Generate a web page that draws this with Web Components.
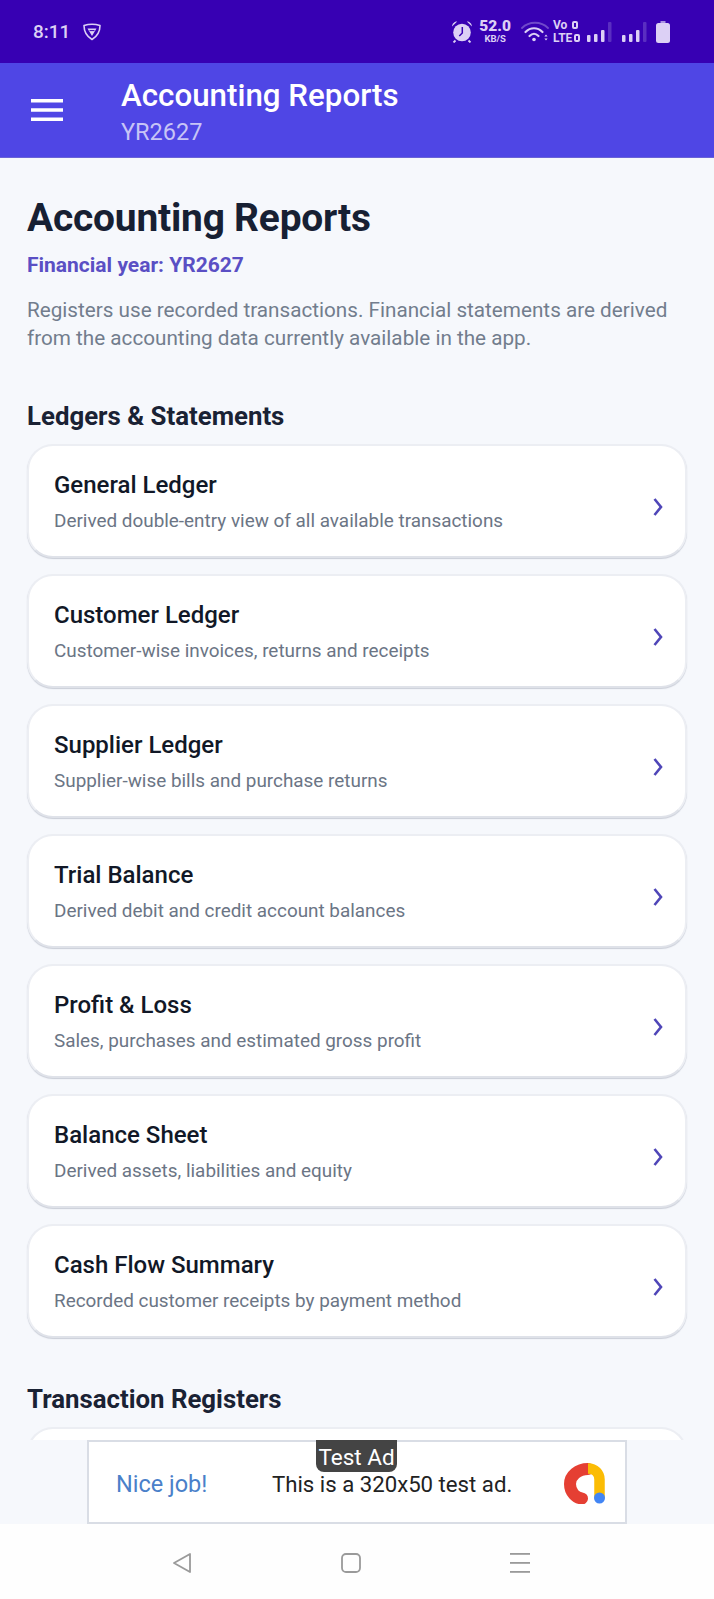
<!DOCTYPE html>
<html lang="en">
  <head>
    <meta charset="UTF-8" />
    <meta name="viewport" content="width=device-width, initial-scale=1.0" />
    <title>Accounting Reports</title>
    <style>
      html, body { margin: 0; padding: 0; }
      body { font-family: Roboto, "Liberation Sans", sans-serif; background: #f6f8fc; }
      report-screen { height: 1599px; }
    </style>
  </head>
  <body>
    <report-screen>
      <status-bar slot="status"></status-bar>
      <app-header slot="header" title="Accounting Reports" subtitle="YR2627"></app-header>

      <page-intro heading="Accounting Reports" year="Financial year: YR2627">
        Registers use recorded transactions. Financial statements are derived from the accounting data currently available in the app.
      </page-intro>

      <report-section heading="Ledgers &amp; Statements">
        <report-card title="General Ledger" text="Derived double-entry view of all available transactions"></report-card>
        <report-card title="Customer Ledger" text="Customer-wise invoices, returns and receipts"></report-card>
        <report-card title="Supplier Ledger" text="Supplier-wise bills and purchase returns"></report-card>
        <report-card title="Trial Balance" text="Derived debit and credit account balances"></report-card>
        <report-card title="Profit &amp; Loss" text="Sales, purchases and estimated gross profit"></report-card>
        <report-card title="Balance Sheet" text="Derived assets, liabilities and equity"></report-card>
        <report-card title="Cash Flow Summary" text="Recorded customer receipts by payment method"></report-card>
      </report-section>

      <report-section heading="Transaction Registers" class="second">
        <report-card></report-card>
      </report-section>

      <ad-banner slot="ad"></ad-banner>
      <nav-bar slot="nav"></nav-bar>
    </report-screen>

    <template id="report-screen-template">
      <style>
        :host { display: flex; flex-direction: column; width: 714px; overflow: hidden; background: #f6f8fc; }
        .scroll { flex: 1; min-height: 0; overflow: hidden; padding: 0 27px 0 27px; }
      </style>
      <slot name="status"></slot>
      <slot name="header"></slot>
      <div class="scroll"><slot></slot></div>
      <slot name="ad"></slot>
      <slot name="nav"></slot>
    </template>

    <template id="status-bar-template">
      <style>
        :host { display: flex; align-items: center; height: 63px; box-sizing: border-box; padding: 0 44px 0 33px; background: #3700b3; color: #dcd0f5; }
        .time { font-size: 19px; font-weight: 500; }
        .vpn { margin-left: 12px; }
        .right { margin-left: auto; display: flex; align-items: center; }
        .speed { display: flex; flex-direction: column; align-items: center; margin: 0 10px 0 6px; font-weight: 700; line-height: 1; }
        .speed b { font-size: 15.500px; line-height: 15px; }
        .speed small { font-size: 9.500px; font-weight: 700; line-height: 10px; }
        .volte { display: flex; flex-direction: column; align-items: flex-start; width: 27px; margin: 0 7px 0 4px; font-weight: 700; }
        .volte span { display: flex; align-items: center; gap: 2px; font-size: 12px; line-height: 13px; }
        .volte i { display: block; width: 6px; height: 8px; box-sizing: border-box; border: 2px solid currentColor; border-radius: 2px; }
        .volte span:first-child i { margin-left: 3px; }
        svg { display: block; }
      </style>
      <span class="time">8:11</span>
      <svg class="vpn" width="20" height="18" viewBox="0 0 20 18" fill="none" stroke="currentColor" stroke-width="1.6" stroke-linejoin="round">
        <path d="M2 2.5c5 -1.6 11 -1.6 16 0c0 6 -3 11 -8 14c-5 -3 -8 -8 -8 -14z"/>
        <path d="M5.5 5.5h9l-4.500 7.500z" fill="currentColor" stroke="none"/>
        <path d="M7.500 7.600h5" stroke="#3700b3" stroke-width="1"/>
      </svg>
      <div class="right">
        <svg width="22" height="23" viewBox="0 0 22 23" fill="currentColor">
          <circle cx="11" cy="12.500" r="8.800"/>
          <path d="M1 6.500c.2-3 2.500-5 5.200-5zM21 6.500c-.2-3-2.500-5-5.200-5z"/>
          <path d="M4.500 20.500l-2 2M17.500 20.500l2 2" stroke="currentColor" stroke-width="1.800"/>
          <path d="M11.300 7v6l-3 3" fill="none" stroke="#3700b3" stroke-width="1.500"/>
        </svg>
        <div class="speed"><b>52.0</b><small>KB/S</small></div>
        <svg width="28" height="21" viewBox="0 0 28 21" fill="none" stroke="currentColor" stroke-linecap="round">
          <path d="M1 7c7-7 19-7 26 0" stroke-opacity=".35" stroke-width="1.800"/>
          <path d="M4.500 11c5-5 12-5 17 0" stroke-width="2.200"/>
          <path d="M8.500 15c3-3 6-3 9 0" stroke-width="2.200"/>
          <circle cx="13" cy="18.500" r="1.800" fill="currentColor" stroke="none"/>
          <path d="M25 13.500l1.600 2h-3.200zM25 19.500l1.600-2h-3.200z" fill="currentColor" stroke="none"/>
        </svg>
        <div class="volte"><span>Vo<i></i></span><span>LTE<i></i></span></div>
        <signal-bars></signal-bars>
        <signal-bars style="margin-left: 9px"></signal-bars>
        <svg style="margin-left: 8px" width="14" height="22" viewBox="0 0 14 22" fill="currentColor">
          <path d="M4.500 0h5v2h-5z" opacity=".7"/>
          <rect x="0" y="2" width="14" height="20" rx="2.500"/>
        </svg>
      </div>
    </template>

    <template id="signal-bars-template">
      <style>
        :host { display: block; }
        svg { display: block; }
      </style>
      <svg width="26" height="20" viewBox="0 0 26 20" fill="currentColor">
        <rect x="0" y="13" width="3.500" height="7" rx="1"/>
        <rect x="7" y="12" width="3.500" height="8" rx="1"/>
        <rect x="14" y="8" width="3.500" height="12" rx="1"/>
        <rect x="21" y="0" width="3.500" height="20" rx="1" opacity=".22"/>
      </svg>
    </template>

    <template id="app-header-template">
      <style>
        :host { display: flex; align-items: center; height: 95px; box-sizing: border-box; background: #4f46e5; border-bottom: 1px solid #6a63d6; color: #fff; }
        .menu { width: 121px; flex: none; padding-left: 31px; box-sizing: border-box; }
        svg { display: block; }
        .titles { display: flex; flex-direction: column; padding-top: 8px; }
        .title { font-size: 31.300px; font-weight: 500; line-height: 36px; }
        .sub { font-size: 23.500px; line-height: 36px; color: #c7c4f6; }
      </style>
      <div class="menu">
        <svg width="32" height="22" viewBox="0 0 32 22" fill="#fff">
          <rect x="0" y="0" width="32" height="3.500"/>
          <rect x="0" y="9.250" width="32" height="3.500"/>
          <rect x="0" y="18.500" width="32" height="3.500"/>
        </svg>
      </div>
      <div class="titles">
        <span class="title" id="title"></span>
        <span class="sub" id="sub"></span>
      </div>
    </template>

    <template id="page-intro-template">
      <style>
        :host { display: block; padding-top: 36px; }
        h1 { margin: 0; font-size: 38.900px; line-height: 48px; font-weight: 700; color: #172033; letter-spacing: -.2px; }
        .year { margin-top: 10px; font-size: 21px; line-height: 26px; font-weight: 700; color: #5a4fc4; }
        p { margin: 18px 0 0; font-size: 20.700px; line-height: 28px; color: #727d8d; }
      </style>
      <h1 id="heading"></h1>
      <div class="year" id="year"></div>
      <p><slot></slot></p>
    </template>

    <template id="report-section-template">
      <style>
        :host { display: block; margin-top: 48px; }
        :host(.second) { margin-top: 45px; }
        h2 { margin: 0 0 12px; font-size: 25.800px; line-height: 32px; font-weight: 700; color: #1a2234; }
        .list { display: flex; flex-direction: column; gap: 16px; }
      </style>
      <h2 id="heading"></h2>
      <div class="list"><slot></slot></div>
    </template>

    <template id="report-card-template">
      <style>
        :host { display: flex; align-items: center; justify-content: space-between; height: 114px; box-sizing: border-box; padding: 0 21px 0 25px; background: #fff; border: 2px solid #eceef3; border-bottom-color: #dfe2e9; border-radius: 26px; box-shadow: 0 1px 1px rgba(120, 130, 150, .35); }
        .text { display: flex; flex-direction: column; gap: 8px; padding-top: 2px; }
        .title { font-size: 24px; line-height: 30px; font-weight: 500; color: #111827; }
        .sub { font-size: 18.900px; line-height: 26px; color: #6b7585; }
        svg { display: block; margin-top: 11px; }
      </style>
      <div class="text">
        <span class="title" id="title"></span>
        <span class="sub" id="sub"></span>
      </div>
      <svg width="12" height="18" viewBox="0 0 12 18" fill="none" stroke="#4f46b8" stroke-width="2.600" stroke-linejoin="miter">
        <path d="M2.500 1l6.500 8l-6.500 8"/>
      </svg>
    </template>

    <template id="ad-banner-template">
      <style>
        :host { display: block; height: 84px; position: relative; background: #f6f8fc; }
        .ad { display: flex; align-items: center; width: 540px; height: 84px; margin: 0 auto; box-sizing: border-box; border: 2px solid #d9dde5; background: #fff; padding: 4px 20px 0 27px; }
        .badge { position: absolute; top: 0; left: 316px; width: 81px; height: 32px; border-radius: 0 0 8px 8px; background: #444; color: #fff; font-size: 22.500px; line-height: 34px; text-align: center; }
        .nice { font-size: 23.500px; font-weight: 400; color: #4a80c9; width: 156px; flex: none; }
        .msg { font-size: 22.200px; color: #222; flex: 1; }
        svg { display: block; margin-top: -2px; }
      </style>
      <div class="ad">
        <span class="nice">Nice job!</span>
        <span class="msg">This is a 320x50 test ad.</span>
        <svg width="41" height="41" viewBox="0 0 41 41" fill="none" stroke-linecap="round">
          <path d="M24 6c-10 0-18 6.500-18 15s6 14 12 14.500" stroke="#e53f33" stroke-width="12"/>
          <path d="M24 5.500c7 0 11.500 5 11.500 11v18.500" stroke="#fbbc04" stroke-width="10.500" stroke-linecap="butt"/>
          <circle cx="35.500" cy="35" r="5.500" fill="#4285f4"/>
        </svg>
      </div>
      <span class="badge">Test Ad</span>
    </template>

    <template id="nav-bar-template">
      <style>
        :host { display: flex; align-items: center; justify-content: center; height: 75px; background: #fefefe; gap: 149px; padding: 2px 12px 0 0; box-sizing: border-box; }
        svg { display: block; }
      </style>
      <svg width="20" height="20" viewBox="0 0 20 20" fill="none" stroke="#9a9a9a" stroke-width="1.800" stroke-linejoin="round">
        <path d="M18 1v18L2 10z"/>
      </svg>
      <svg width="20" height="20" viewBox="0 0 20 20" fill="none" stroke="#9a9a9a" stroke-width="1.800">
        <rect x="1" y="1" width="18" height="18" rx="4"/>
      </svg>
      <svg width="20" height="20" viewBox="0 0 20 20" fill="#9a9a9a">
        <rect x="0" y="0" width="20" height="1.800"/>
        <rect x="0" y="9" width="20" height="1.800"/>
        <rect x="0" y="18" width="20" height="1.800"/>
      </svg>
    </template>

    <script type="text/javascript">
      // small base so every element clones its own template into an open shadow root
      class TemplateElement extends HTMLElement {
        constructor() {
          super()
          this.attachShadow({ mode: 'open' })
          const tpl = document
            .getElementById(this.constructor.templateId)
            .content.cloneNode(true)
          this.shadowRoot.appendChild(tpl)
        }

        setText(id, attr) {
          this.shadowRoot.getElementById(id).textContent = this.getAttribute(attr) || ''
        }
      }

      class ReportScreen extends TemplateElement {
        static templateId = 'report-screen-template'
      }

      class StatusBar extends TemplateElement {
        static templateId = 'status-bar-template'
      }

      class SignalBars extends TemplateElement {
        static templateId = 'signal-bars-template'
      }

      class AppHeader extends TemplateElement {
        static templateId = 'app-header-template'
        connectedCallback() {
          this.setText('title', 'title')
          this.setText('sub', 'subtitle')
        }
      }

      class PageIntro extends TemplateElement {
        static templateId = 'page-intro-template'
        connectedCallback() {
          this.setText('heading', 'heading')
          this.setText('year', 'year')
        }
      }

      class ReportSection extends TemplateElement {
        static templateId = 'report-section-template'
        connectedCallback() {
          this.setText('heading', 'heading')
        }
      }

      class ReportCard extends TemplateElement {
        static templateId = 'report-card-template'
        connectedCallback() {
          this.setText('title', 'title')
          this.setText('sub', 'text')
        }
      }

      class AdBanner extends TemplateElement {
        static templateId = 'ad-banner-template'
      }

      class NavBar extends TemplateElement {
        static templateId = 'nav-bar-template'
      }

      customElements.define('report-screen', ReportScreen)
      customElements.define('status-bar', StatusBar)
      customElements.define('signal-bars', SignalBars)
      customElements.define('app-header', AppHeader)
      customElements.define('page-intro', PageIntro)
      customElements.define('report-section', ReportSection)
      customElements.define('report-card', ReportCard)
      customElements.define('ad-banner', AdBanner)
      customElements.define('nav-bar', NavBar)
    </script>
  </body>
</html>
